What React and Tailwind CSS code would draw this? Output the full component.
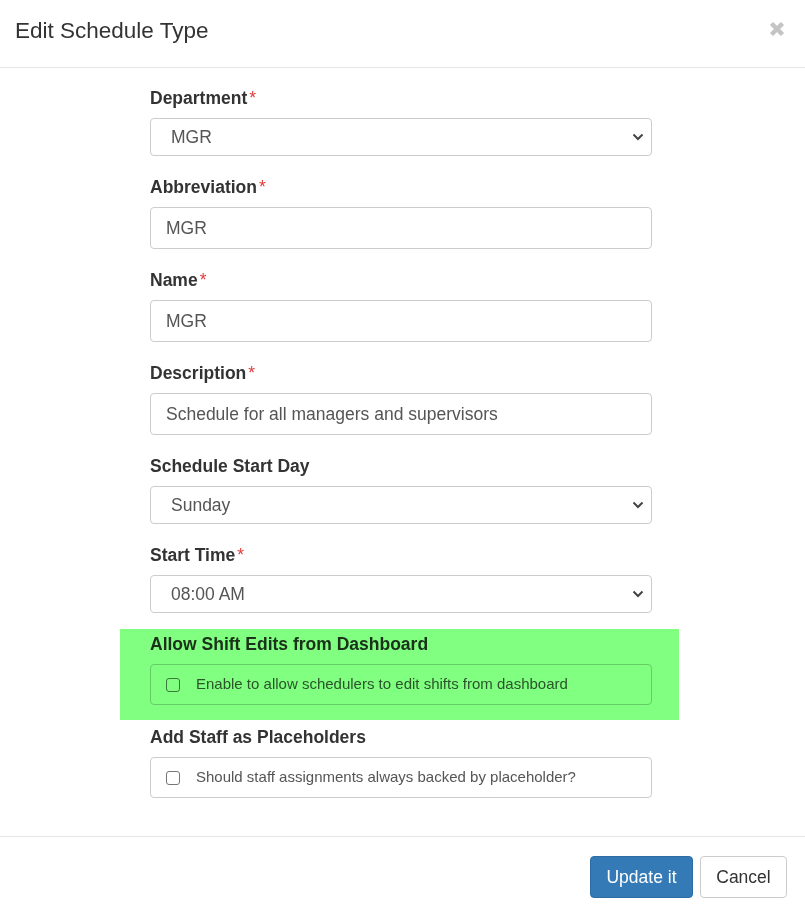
import React from "react";

const font = { fontFamily: '"Liberation Sans", Arial, sans-serif' };

function Label({ children, required }) {
  return (
    <div className="h-5 mb-[10px] text-[17.5px] leading-5 font-bold text-[#333]">
      {children}
      {required && <span className="ml-[2px] text-[#e23b3b] font-normal">*</span>}
    </div>
  );
}

function Chevron() {
  return (
    <svg width="12" height="8" viewBox="0 0 12 8" className="absolute right-[7px] top-1/2 -translate-y-1/2 pointer-events-none">
      <path d="M1.5 1.5 L6 6 L10.5 1.5" fill="none" stroke="#444" strokeWidth="2" />
    </svg>
  );
}

function SelectField({ value }) {
  return (
    <div className="relative h-[38px] border border-[#ccc] rounded-[4px] bg-white flex items-center pl-[20px] text-[17.5px] text-[#555]">
      {value}
      <Chevron />
    </div>
  );
}

function TextField({ value }) {
  return (
    <div className="h-[42px] border border-[#ccc] rounded-[4px] bg-white flex items-center pl-[15px] text-[17.5px] text-[#555]">
      {value}
    </div>
  );
}

function CheckField({ text }) {
  return (
    <div className="h-[41px] border border-[#ccc] rounded-[4px] flex items-center pl-[15px] text-[15px] text-[#555]">
      <span className="w-[14px] h-[14px] border border-[#767676] rounded-[3px] bg-white mr-[16px]" />
      {text}
    </div>
  );
}

export default function App() {
  const groups = [
    { label: "Department", required: true, kind: "select", value: "MGR" },
    { label: "Abbreviation", required: true, kind: "text", value: "MGR" },
    { label: "Name", required: true, kind: "text", value: "MGR" },
    { label: "Description", required: true, kind: "text", value: "Schedule for all managers and supervisors" },
    { label: "Schedule Start Day", kind: "select", value: "Sunday" },
    { label: "Start Time", required: true, kind: "select", value: "08:00 AM" },
  ];

  return (
    <div className="w-[805px] h-[914px] bg-white" style={font}>
      <div className="h-[68px] border-b border-[#e5e5e5] flex items-center justify-between pl-[15px] pr-[20px]">
        <h4 className="text-[22.5px] text-[#333] leading-none -mt-[4px]">Edit Schedule Type</h4>
        <svg width="16" height="16" viewBox="0 0 16 16" className="-mt-[9px]">
          <path d="M2.5 2.5 L13.5 13.5 M13.5 2.5 L2.5 13.5" stroke="#c4c4c4" strokeWidth="4.5" />
        </svg>
      </div>

      <div className="w-[502px] ml-[150px] pt-[20px] pb-[38px]">
        {groups.map((g) => (
          <div key={g.label} className="mb-[21px]">
            <Label required={g.required}>{g.label}</Label>
            {g.kind === "select" ? <SelectField value={g.value} /> : <TextField value={g.value} />}
          </div>
        ))}

        <div className="relative mb-[22px]">
          <div className="absolute -left-[30px] -right-[27px] -top-[5px] -bottom-[15px] bg-[#80ff80] mix-blend-multiply pointer-events-none" />
          <Label>Allow Shift Edits from Dashboard</Label>
          <CheckField text="Enable to allow schedulers to edit shifts from dashboard" />
        </div>

        <div>
          <Label>Add Staff as Placeholders</Label>
          <CheckField text="Should staff assignments always backed by placeholder?" />
        </div>
      </div>

      <div className="border-t border-[#e5e5e5] flex justify-end gap-[7px] pt-[19px] pr-[18px]">
        <button className="h-[42px] w-[103px] rounded-[4px] bg-[#337ab7] border border-[#2e6da4] text-white text-[17.5px]">
          Update it
        </button>
        <button className="h-[42px] w-[87px] rounded-[4px] bg-white border border-[#ccc] text-[#333] text-[17.5px]">
          Cancel
        </button>
      </div>
    </div>
  );
}
